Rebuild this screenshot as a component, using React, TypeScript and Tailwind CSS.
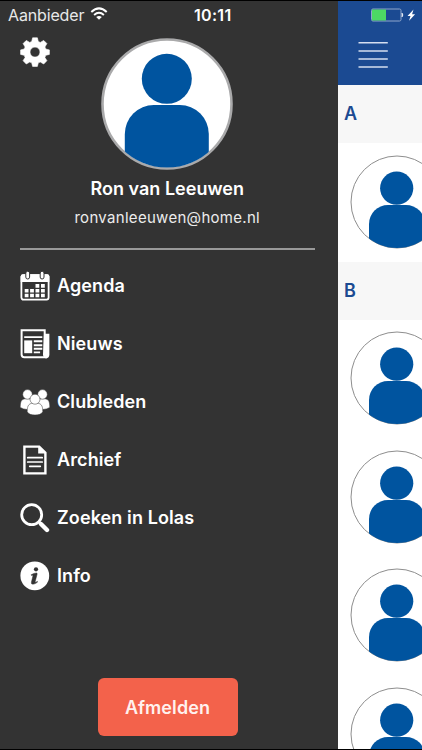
import type { ReactNode } from "react";

type MenuItem = {
  label: string;
  icon: ReactNode;
};

function GearIcon() {
  return (
    <svg viewBox="0 0 30 30" className="block size-[30px]" fill="white">
      <path
        fillRule="evenodd"
        d="M12.6 .8h4.8l.9 3.7 2 .9 3.4-2 3.2 3.2-2 3.4.9 2 3.6.9v4.5l-3.6.9-.9 2.1 2 3.3-3.2 3.3-3.4-2-2 .8-.9 3.6h-4.8l-.9-3.6-2-.8-3.4 2-3.2-3.3 2-3.3-.9-2.1-3.6-.9v-4.5l3.6-.9.9-2-2-3.4 3.2-3.2 3.4 2 2-.9zM15 10.1a5 5 0 1 0 0 10 5 5 0 0 0 0-10z"
        stroke="white"
        strokeWidth=".6"
        strokeLinejoin="round"
      />
    </svg>
  );
}

function CalendarIcon() {
  return (
    <svg viewBox="0 0 30 30" className="block size-[30px]">
      <rect x="1.4" y="4.2" width="27.2" height="24.4" rx="2" fill="none" stroke="white" strokeWidth="1.8" />
      <path d="M.7 11V5.2Q.7 3.2 2.7 3.2h24.6q2 0 2 2V11z" fill="white" />
      <g fill="white" stroke="#333" strokeWidth="1">
        <rect x="5.8" y=".2" width="3.8" height="7.8" rx="1.9" />
        <rect x="20.2" y=".2" width="3.8" height="7.8" rx="1.9" />
      </g>
      <path
        d="M15.5 13h3.8v3.7h-3.8zM21 13h3.8v3.7H21zM4.7 18h3.8v3.6H4.7zM10.1 18h3.8v3.6h-3.8zM15.5 18h3.8v3.6h-3.8zM21 18h3.8v3.6H21zM4.7 22.8h3.8v3.4H4.7zM10.1 22.8h3.8v3.4h-3.8zM15.5 22.8h3.8v3.4h-3.8zM21 22.8h3.8v3.4H21z"
        fill="white"
      />
    </svg>
  );
}

function NewsIcon() {
  return (
    <svg viewBox="0 0 30 30" className="block size-[30px]" fill="none" stroke="white">
      <path d="M1.6 1.3h23.1v23q0 3.5 1.8 3.9H4.3q-2.7 0-2.7-2.7z" strokeWidth="2" />
      <path d="M24 4.8h5.4v20.4q0 4-3.4 4.2-3-1-3-4.2z" fill="white" stroke="none" />
      <path d="M4.2 8.1h18.1M13.8 12.3h8.5M13.8 16.2h8.5M13.8 19.8h8.5M13.8 23.4h6.3" strokeWidth="1.9" />
      <path d="M4.2 11.4h8v12.8h-8z" fill="white" stroke="none" />
    </svg>
  );
}

function MembersIcon() {
  return (
    <svg viewBox="0 0 30 30" className="block size-[30px]" fill="white" stroke="#333" strokeWidth=".5">
      <path d="M.2 20.4c0-7 1.7-8.8 7.3-8.8s6.8 2 6.8 8.8q-2.4 2.6-6.8 2.2T.2 20.4z" />
      <path d="M29.8 20.4c0-7-1.7-8.8-7.3-8.8s-6.8 2-6.8 8.8q2.4 2.6 6.8 2.2t7.3-2.2z" />
      <circle cx="7.5" cy="7.4" r="4.8" />
      <circle cx="22.5" cy="7.4" r="4.8" />
      <path d="M7.2 24.8c0-6.9 1.8-8.8 7.8-8.8s7.8 1.9 7.8 8.8c-1.5 2.6-4.1 3.2-7.8 3.2s-6.3-.6-7.8-3.2z" />
      <circle cx="15" cy="12.2" r="5" />
    </svg>
  );
}

function ArchiveIcon() {
  return (
    <svg viewBox="0 0 30 30" className="block size-[30px]" fill="none" stroke="white">
      <path d="M4.4 1.6h14.8l6.2 6.1v20.7h-21z" strokeWidth="2.4" />
      <path d="M18.2 1v7.4h7.6z" fill="white" stroke="none" />
      <path d="M7.7 12.7h14.5M7.7 17h14.5M9.7 21.3h10.6" strokeWidth="1.7" strokeLinecap="round" />
    </svg>
  );
}

function SearchIcon() {
  return (
    <svg viewBox="0 0 30 30" className="block size-[30px]" fill="none" stroke="white">
      <circle cx="11.7" cy="11.7" r="10" strokeWidth="2.8" />
      <path d="M18.8 18.8l1.8 1.8" strokeWidth="2.6" />
      <path d="M21 21l6 6" strokeWidth="4.4" strokeLinecap="round" />
    </svg>
  );
}

function InfoIcon() {
  return (
    <svg viewBox="0 0 30 30" className="block size-[30px]">
      <circle cx="14.8" cy="14.8" r="14.4" fill="white" />
      <circle cx="16" cy="8.3" r="2.1" fill="#333" />
      <path
        d="M11.2 13.7q3-1.7 5.2-1.7 1 0 .7 1.2l-1.9 7.2q-.2.9.5.8l1.7-.8.2.7q-2.4 2.1-4.7 2.1-2 0-1.5-2l1.5-6.1q.2-1-.5-.9l-1 .2z"
        fill="#333"
        stroke="#333"
        strokeWidth=".5"
      />
    </svg>
  );
}

const menuItems: MenuItem[] = [
  { label: "Agenda", icon: <CalendarIcon /> },
  { label: "Nieuws", icon: <NewsIcon /> },
  { label: "Clubleden", icon: <MembersIcon /> },
  { label: "Archief", icon: <ArchiveIcon /> },
  { label: "Zoeken in Lolas", icon: <SearchIcon /> },
  { label: "Info", icon: <InfoIcon /> },
];

function ProfileAvatar() {
  return (
    <svg viewBox="0 0 132 132" className="block size-[132px]">
      <clipPath id="profile-clip">
        <circle cx="66" cy="66" r="63.5" />
      </clipPath>
      <circle cx="66" cy="66" r="64.5" fill="white" stroke="#aaaaab" strokeWidth="2.6" />
      <g clipPath="url(#profile-clip)" fill="#00549f">
        <circle cx="65.8" cy="40.8" r="25" />
        <rect x="23.8" y="67" width="84" height="80" rx="29" />
      </g>
    </svg>
  );
}

function MemberRow() {
  return (
    <div className="h-[118.5px] shrink-0 pl-[12px] pt-[11.5px]">
      <svg viewBox="0 0 94 94" className="block size-[94px]">
        <clipPath id="member-clip">
          <circle cx="47" cy="47" r="46" />
        </clipPath>
        <circle cx="47" cy="47" r="46" fill="white" stroke="#8e8e8e" strokeWidth="1" />
        <g clipPath="url(#member-clip)" fill="#00549f">
          <circle cx="46.7" cy="33.2" r="16.6" />
          <rect x="19" y="50" width="56" height="60" rx="19" />
        </g>
      </svg>
    </div>
  );
}

function SectionHeader({ letter }: { letter: string }) {
  return (
    <div className="flex h-[58px] shrink-0 items-center bg-[#f7f7f7] pb-px pl-[6.5px] text-[18px] font-semibold text-[#1c4b92]">
      {letter}
    </div>
  );
}

function Drawer() {
  return (
    <aside className="flex w-[337.5px] shrink-0 flex-col bg-[#333] text-white">
      <div className="flex h-[27px] items-center pl-2">
        <span className="w-[82px] text-[16px] tracking-[-0.15px] text-[#e8e8e8]">Aanbieder</span>
        <svg viewBox="0 0 18 13" className="-mt-0.5 h-[13px] w-[18px]" fill="none" stroke="white" strokeWidth="2">
          <path d="M1.3 4.9q7.7-7 15.4 0M4.1 7.9q4.9-4.2 9.8 0" />
          <path d="M6.2 10q2.8-2.2 5.6 0L9 12.7z" fill="white" stroke="none" />
        </svg>
        <span className="ml-[86px] text-[16px] font-semibold tracking-[0.3px]">10:11</span>
      </div>

      <div className="flex h-[143px] items-start pl-[19.5px] pt-[9px]">
        <GearIcon />
        <div className="mt-px ml-[51.5px]">
          <ProfileAvatar />
        </div>
      </div>

      <div className="flex flex-col items-center">
        <div className="mt-[4px] mr-[3px] text-[18px] leading-7 font-semibold">Ron van Leeuwen</div>
        <div className="mr-[3px] text-[15px] leading-[29px] tracking-[0.3px] text-[#ececec]">ronvanleeuwen@home.nl</div>
      </div>

      <div className="mr-[22.5px] ml-[20px] mt-[16px] h-[1.5px] bg-[#999]" />

      <nav className="mt-[8px] flex flex-col">
        {menuItems.map((item) => (
          <div key={item.label} className="flex h-[58px] items-start pt-[13.5px] pl-[19.5px]">
            {item.icon}
            <span className="ml-[7.5px] text-[18px] leading-[29px] font-semibold tracking-[0.1px]">{item.label}</span>
          </div>
        ))}
      </nav>

      <button className="mt-auto mb-[13px] ml-[97.5px] h-[58px] w-[140px] rounded-[6px] bg-[#f3624b] text-[18px] font-semibold tracking-[0.1px] text-[#fff1ee]">
        Afmelden
      </button>
    </aside>
  );
}

function MemberList() {
  return (
    <main className="flex w-[84.5px] shrink-0 flex-col overflow-hidden bg-white">
      <header className="flex h-[84px] shrink-0 flex-col bg-[#1b4a92]">
        <div className="flex h-[27px] items-center pl-[33.5px]">
          <svg viewBox="0 0 46 14" className="h-[14px] w-[46px]">
            <rect x=".5" y="1" width="29.5" height="12" rx="1.5" fill="none" stroke="#8fa5cb" />
            <path d="M1 1.5h14v11H1z" fill="#4cd964" />
            <path d="M31 5q1.8 2 0 4z" fill="white" stroke="white" strokeWidth=".6" />
            <path d="M42.5 1.5l-6 6.4h3l-1.4 4.8 6-6.5h-3z" fill="white" />
          </svg>
        </div>
        <svg viewBox="0 0 30 28" className="mt-[13px] ml-[20.5px] h-7 w-[30px]" stroke="#d5def0" strokeWidth="1.5">
          <path d="M.5 1.7h29.3M.5 9.9h29.3M.5 18h29.3M.5 26.1h29.3" />
        </svg>
      </header>
      <SectionHeader letter="A" />
      <MemberRow />
      <SectionHeader letter="B" />
      <MemberRow />
      <MemberRow />
      <MemberRow />
      <MemberRow />
    </main>
  );
}

export default function App() {
  return (
    <div className="flex h-[750px] w-[422px] overflow-hidden border-y border-black bg-[#333] font-['Inter','Liberation_Sans',sans-serif]">
      <Drawer />
      <MemberList />
    </div>
  );
}
